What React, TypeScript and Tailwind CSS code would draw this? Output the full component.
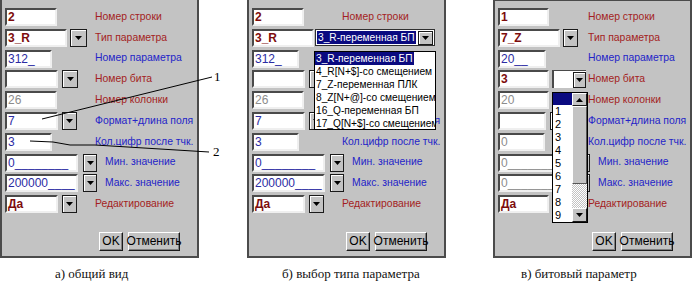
import React from "react";

const RED = "text-[#a31e22]";
const BLUE = "text-[#2323c8]";
const FRED = "font-bold text-[#7d0c0c]";
const FBLUE = "text-[#2b2ba3]";
const FGRAY = "text-[#8c8c8c]";

const Tri = ({ up }: { up?: boolean }) => (
  <svg width="7" height="4" viewBox="0 0 7 4">
    <path d={up ? "M0 4h7L3.5 0z" : "M0 0h7L3.5 4z"} fill="#000" />
  </svg>
);

function Field({ w, tone = "", children }: { w: string; tone?: string; children?: React.ReactNode }) {
  return (
    <div
      className={`${w} h-[18px] shrink-0 bg-white border-2 border-t-[#4a4a4a] border-l-[#4a4a4a] border-b-[#efefef] border-r-[#efefef] flex items-center pl-[1px] overflow-hidden whitespace-nowrap text-[12px] leading-none ${tone}`}
    >
      {children}
    </div>
  );
}

function DBtn({ cls }: { cls: string }) {
  return (
    <div
      className={`${cls} h-[18px] shrink-0 border border-[#1a1a1a] bg-[#c3c3c3] shadow-[inset_1px_1px_0_#fff] flex items-center justify-center`}
    >
      <Tri />
    </div>
  );
}

function Row({ left = "w-[90px]", children, label }: { left?: string; children?: React.ReactNode; label?: React.ReactNode }) {
  return (
    <div className="flex items-center h-[18px] shrink-0">
      <div className={`${left} shrink-0 flex items-center h-full`}>{children}</div>
      {label}
    </div>
  );
}

const L = ({ c, children }: { c: string; children: React.ReactNode }) => (
  <span className={`text-[10.4px] leading-none whitespace-nowrap ${c}`}>{children}</span>
);

function Btn({ cls, children }: { cls: string; children: React.ReactNode }) {
  return (
    <div
      className={`${cls} h-[19px] border border-t-white border-l-white border-b-[#1a1a1a] border-r-[#1a1a1a] shadow-[inset_-1px_-1px_0_#808080] bg-[#c3c3c3] flex items-center justify-center text-[12px] leading-none text-black font-['Liberation_Sans_Narrow','Liberation_Sans',sans-serif]`}
    >
      {children}
    </div>
  );
}

function Buttons() {
  return (
    <div className="flex items-center h-[19px] mt-[16px] shrink-0">
      <Btn cls="w-[24px] ml-[94px]">OK</Btn>
      <Btn cls="w-[52px] ml-[5px]">Отменить</Btn>
    </div>
  );
}

function Panel({ top, children }: { top?: boolean; children: React.ReactNode }) {
  return (
    <div
      className={`w-[199px] h-[258px] bg-[#c3c3c3] border-x-2 border-b-2 border-[#4b4b4b] flex flex-col gap-[2.8px] pl-[3px] ${top ? "border-t pt-[7px]" : "pt-[8px]"}`}
    >
      {children}
    </div>
  );
}

const Caption = ({ cls, children }: { cls: string; children: React.ReactNode }) => (
  <div className={`mt-[8px] text-[13px] leading-[16px] font-['Liberation_Serif',serif] text-[#111] whitespace-nowrap ${cls}`}>
    {children}
  </div>
);

const typeItems = [
  "3_R-переменная БП",
  "4_R[N+$]-со смещением",
  "7_Z-переменная ПЛК",
  "8_Z[N+@]-со смещением",
  "16_Q-переменная БП",
  "17_Q[N+$]-со смещением",
];

function TypeCombo() {
  return (
    <div className="relative z-10 ml-[1px] w-[120px] h-[17px] shrink-0 bg-white border border-[#303030] flex items-center">
      <span className="ml-[1px] h-[13px] bg-[#0a0a80] text-white text-[10.2px] leading-[13px] pl-[1px] pr-[1px] whitespace-nowrap">
        3_R-переменная БП
      </span>
      <div className="ml-auto mr-[1px] w-[15px] h-[14px] border border-[#1a1a1a] bg-[#c3c3c3] shadow-[inset_1px_1px_0_#fff] flex items-center justify-center">
        <Tri />
      </div>
      <div className="absolute left-[-2px] top-[21px] w-[122px] h-[79px] bg-white border border-black overflow-hidden flex flex-col">
        {typeItems.map((t, i) => (
          <div key={t} className="h-[13px] shrink-0 flex">
            <span
              className={`h-[13px] text-[10.2px] leading-[13px] pl-[1px] pr-[1px] whitespace-nowrap ${i === 0 ? "bg-[#0a0a80] text-white" : "text-black"}`}
            >
              {t}
            </span>
          </div>
        ))}
      </div>
    </div>
  );
}

function BitCombo() {
  return (
    <div className="relative z-10 ml-[3px] w-[34px] h-[18px] shrink-0 bg-white border-l-2 border-t border-[#4a4a4a] flex items-center">
      <div className="ml-auto w-[13px] h-[16px] border border-[#1a1a1a] bg-[#c3c3c3] shadow-[inset_1px_1px_0_#fff] flex items-center justify-center">
        <Tri />
      </div>
      <div className="absolute left-[-2px] top-[21px] w-[36px] h-[131px] bg-white border border-black flex">
        <div className="flex-1 flex flex-col">
          <div className="h-[12px] bg-[#0a0a80] shrink-0" />
          {["1", "2", "3", "4", "5", "6", "7", "8", "9"].map((n) => (
            <div key={n} className="h-[13px] shrink-0 text-[11px] leading-[13px] pl-[2px] text-black">
              {n}
            </div>
          ))}
        </div>
        <div className="w-[15px] flex flex-col bg-[#dcdcdc]">
          <div className="h-[13px] shrink-0 border border-t-white border-l-white border-b-[#1a1a1a] border-r-[#1a1a1a] bg-[#c3c3c3] flex items-center justify-center">
            <Tri up />
          </div>
          <div className="h-[78px] shrink-0 border border-t-white border-l-white border-b-[#555] border-r-[#555] bg-[#c3c3c3]" />
          <div className="flex-1 bg-[repeating-conic-gradient(#c3c3c3_0_25%,#ffffff_0_50%)] bg-[length:2px_2px]" />
          <div className="h-[14px] shrink-0 border border-t-white border-l-white border-b-[#1a1a1a] border-r-[#1a1a1a] bg-[#c3c3c3] flex items-center justify-center">
            <Tri />
          </div>
        </div>
      </div>
    </div>
  );
}

export default function App() {
  return (
    <div className="relative w-[695px] h-[283px] bg-white overflow-hidden font-['Liberation_Sans',Arial,sans-serif]">
      <div className="flex">
        {/* Panel A */}
        <div className="w-[199px] flex flex-col">
          <Panel>
            <Row label={<L c={RED}>Номер строки</L>}>
              <Field w="w-[52px]" tone={FRED}>2</Field>
            </Row>
            <Row label={<L c={RED}>Тип параметра</L>}>
              <Field w="w-[62px]" tone={FRED}>3_R</Field>
              <DBtn cls="w-[17px] ml-[3px]" />
            </Row>
            <Row label={<L c={BLUE}>Номер параметра</L>}>
              <Field w="w-[47px]" tone={FBLUE}>312_</Field>
            </Row>
            <Row label={<L c={RED}>Номер бита</L>}>
              <Field w="w-[53px]" />
              <DBtn cls="w-[16px] ml-[4px]" />
            </Row>
            <Row label={<L c={RED}>Номер колонки</L>}>
              <Field w="w-[52px]" tone={FGRAY}>26</Field>
            </Row>
            <Row label={<L c={BLUE}>Формат+длина поля</L>}>
              <Field w="w-[53px]" tone={FBLUE}>7</Field>
              <DBtn cls="w-[15px] ml-[4px]" />
            </Row>
            <Row label={<L c={BLUE}>Кол.цифр после тчк.</L>}>
              <Field w="w-[47px]" tone={FBLUE}>3</Field>
            </Row>
            <Row left="w-[100px]" label={<L c={BLUE}>Мин. значение</L>}>
              <Field w="w-[73px]" tone={FBLUE}>0________</Field>
              <DBtn cls="w-[14px] ml-[5px]" />
            </Row>
            <Row left="w-[100px]" label={<L c={BLUE}>Макс. значение</L>}>
              <Field w="w-[73px]" tone={FBLUE}>200000____</Field>
              <DBtn cls="w-[14px] ml-[5px]" />
            </Row>
            <Row label={<L c={RED}>Редактирование</L>}>
              <Field w="w-[53px]" tone={FRED}>Да</Field>
              <DBtn cls="w-[15px] ml-[4px]" />
            </Row>
            <Buttons />
          </Panel>
          <Caption cls="pl-[55px]">а) общий вид</Caption>
        </div>

        {/* Panel B */}
        <div className="w-[199px] ml-[48px] flex flex-col">
          <Panel>
            <Row label={<L c={RED}>Номер строки</L>}>
              <Field w="w-[52px]" tone={FRED}>2</Field>
            </Row>
            <div className="flex items-center h-[18px] shrink-0">
              <Field w="w-[62px]" tone={FRED}>3_R</Field>
              <TypeCombo />
            </div>
            <Row label={<L c={BLUE}>Номер параметра</L>}>
              <Field w="w-[47px]" tone={FBLUE}>312_</Field>
            </Row>
            <Row label={<L c={RED}>Номер бита</L>}>
              <Field w="w-[53px]" />
              <DBtn cls="w-[16px] ml-[4px]" />
            </Row>
            <Row label={<L c={RED}>Номер колонки</L>}>
              <Field w="w-[52px]" tone={FGRAY}>26</Field>
            </Row>
            <Row label={<L c={BLUE}>Формат+длина поля</L>}>
              <Field w="w-[53px]" tone={FBLUE}>7</Field>
              <DBtn cls="w-[15px] ml-[4px]" />
            </Row>
            <Row label={<L c={BLUE}>Кол.цифр после тчк.</L>}>
              <Field w="w-[47px]" tone={FBLUE}>3</Field>
            </Row>
            <Row left="w-[100px]" label={<L c={BLUE}>Мин. значение</L>}>
              <Field w="w-[73px]" tone={FBLUE}>0________</Field>
              <DBtn cls="w-[14px] ml-[5px]" />
            </Row>
            <Row left="w-[100px]" label={<L c={BLUE}>Макс. значение</L>}>
              <Field w="w-[73px]" tone={FBLUE}>200000____</Field>
              <DBtn cls="w-[14px] ml-[5px]" />
            </Row>
            <Row label={<L c={RED}>Редактирование</L>}>
              <Field w="w-[53px]" tone={FRED}>Да</Field>
              <DBtn cls="w-[15px] ml-[4px]" />
            </Row>
            <Buttons />
          </Panel>
          <Caption cls="pl-[35px]">б) выбор типа параметра</Caption>
        </div>

        {/* Panel C */}
        <div className="w-[199px] ml-[47px] flex flex-col">
          <Panel top>
            <Row label={<L c={RED}>Номер строки</L>}>
              <Field w="w-[51px]" tone={FRED}>1</Field>
            </Row>
            <Row label={<L c={RED}>Тип параметра</L>}>
              <Field w="w-[62px]" tone={FRED}>7_Z</Field>
              <DBtn cls="w-[15px] ml-[3px]" />
            </Row>
            <Row label={<L c={BLUE}>Номер параметра</L>}>
              <Field w="w-[48px]" tone={FBLUE}>20__</Field>
            </Row>
            <Row label={<L c={RED}>Номер бита</L>}>
              <Field w="w-[51px]" tone={FRED}>3</Field>
              <BitCombo />
            </Row>
            <Row label={<L c={RED}>Номер колонки</L>}>
              <Field w="w-[51px]" tone={FGRAY}>20</Field>
            </Row>
            <Row label={<L c={BLUE}>Формат+длина поля</L>}>
              <Field w="w-[48px]" />
              <DBtn cls="w-[15px] ml-[4px]" />
            </Row>
            <Row label={<L c={BLUE}>Кол.цифр после тчк.</L>}>
              <Field w="w-[47px]" tone={FGRAY}>0</Field>
            </Row>
            <Row left="w-[100px]" label={<L c={BLUE}>Мин. значение</L>}>
              <Field w="w-[73px]" tone={FGRAY}>0________</Field>
              <DBtn cls="w-[14px] ml-[5px]" />
            </Row>
            <Row left="w-[100px]" label={<L c={BLUE}>Макс. значение</L>}>
              <Field w="w-[73px]" tone={FGRAY}>0________</Field>
              <DBtn cls="w-[14px] ml-[5px]" />
            </Row>
            <Row label={<L c={RED}>Редактирование</L>}>
              <Field w="w-[51px]" tone={FRED}>Да</Field>
              <DBtn cls="w-[15px] ml-[4px]" />
            </Row>
            <Buttons />
          </Panel>
          <Caption cls="pl-[28px]">в) битовый параметр</Caption>
        </div>
      </div>

      {/* annotation leader lines */}
      <svg className="absolute left-0 top-0 pointer-events-none" width="695" height="283">
        <line x1="42" y1="119" x2="212" y2="77" stroke="#000" strokeWidth="1" />
        <polyline points="30,141 53,142 70,145 95,145 209,152" fill="none" stroke="#000" strokeWidth="1" />
      </svg>
      <span className="absolute left-[214px] top-[69px] text-[13px] leading-[16px] font-['Liberation_Serif',serif] text-black">1</span>
      <span className="absolute left-[213px] top-[144px] text-[13px] leading-[16px] font-['Liberation_Serif',serif] text-black">2</span>
    </div>
  );
}
